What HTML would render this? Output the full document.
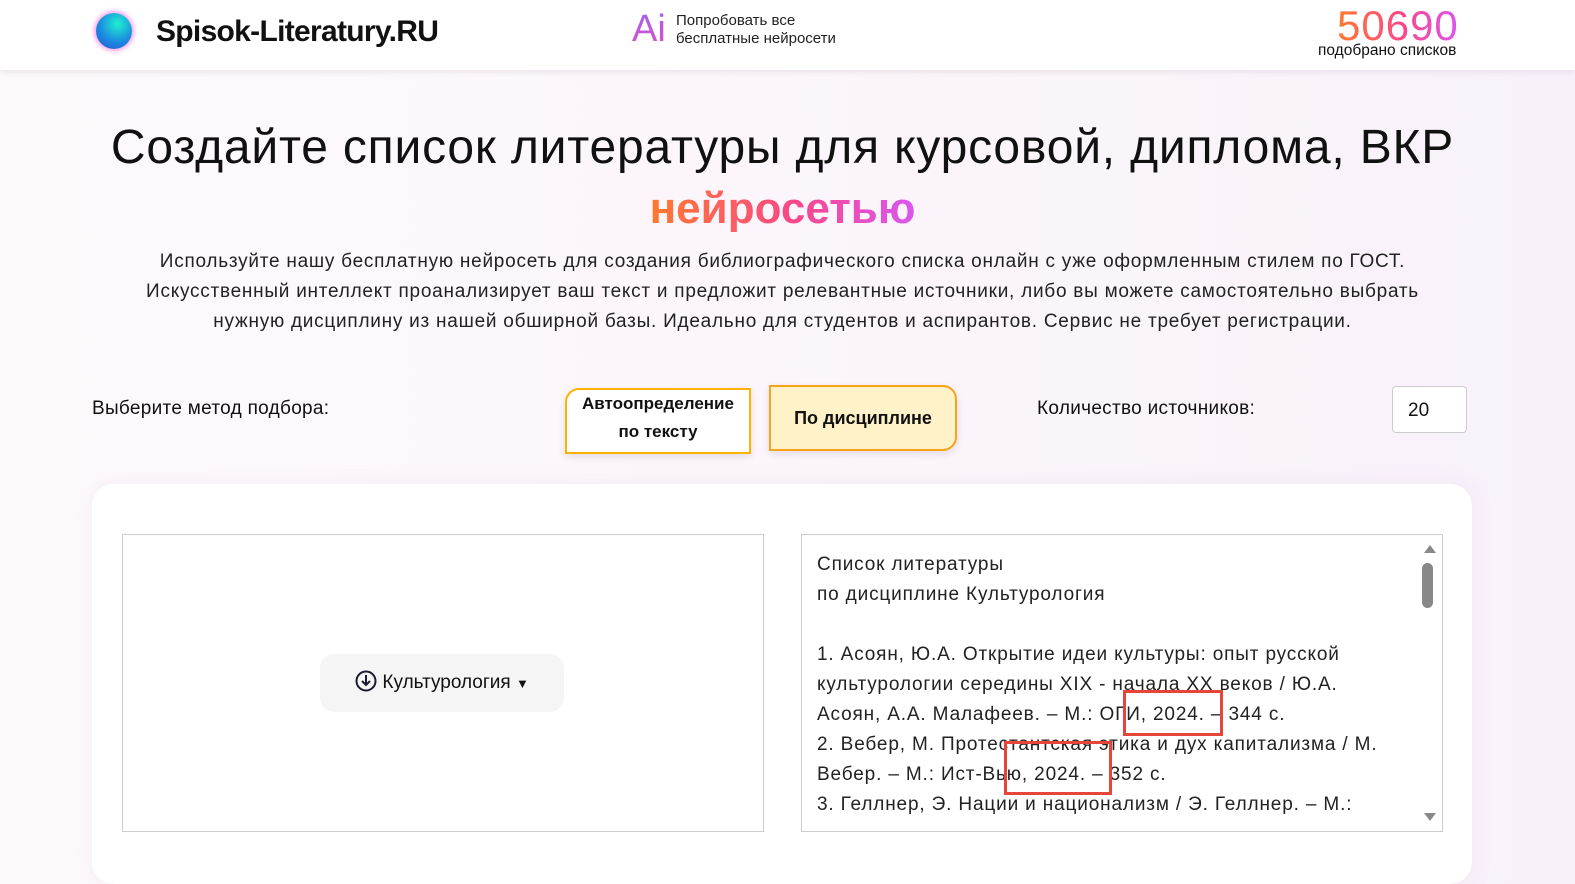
<!DOCTYPE html><html><head><meta charset="utf-8"><style>
body{margin:0;width:1575px;height:860px;overflow:hidden;font-family:"Liberation Sans",sans-serif;background:linear-gradient(90deg,#fdf9fb,#fbf5fb 60%,#f8f1fa);color:#111;position:relative}
.hdr{position:absolute;left:0;top:0;width:1575px;height:70px;background:#fff;box-shadow:0 2px 6px rgba(0,0,0,.08)}
.a{position:absolute}
.grad{background:linear-gradient(90deg,#ff7a2e,#f9478a 55%,#d957f0);-webkit-background-clip:text;background-clip:text;color:transparent}
.card{position:absolute;left:92px;top:484px;width:1380px;height:400px;background:#fff;border-radius:22px;box-shadow:0 0 20px rgba(200,170,200,.15)}
.box{position:absolute;border:1px solid #ccc;background:#fff}
.red{position:absolute;border:3px solid #e6453a}
</style></head><body>
<div class="hdr"></div>
<div class="a" style="left:96px;top:13px;width:36px;height:36px;border-radius:50%;background:radial-gradient(circle at 60% 30%,#1ff0d0,#1a8ae0 55%,#3050d0);box-shadow:0 0 5px 2px #f5a0e8"></div>
<div class="a" style="left:156px;top:15px;font-size:30px;font-weight:bold;letter-spacing:-0.7px">Spisok-Literatury.RU</div>
<div class="a" style="left:632px;top:8px;font-size:38px;background:linear-gradient(#a060f0,#e050c0);-webkit-background-clip:text;color:transparent">Ai</div>
<div class="a" style="left:676px;top:12px;font-size:15px;line-height:18px;color:#222">Попробовать все<br>бесплатные нейросети</div>
<div class="a grad" style="left:1337px;top:3px;font-size:42px;line-height:46px;letter-spacing:1px">50690</div>
<div class="a" style="left:1318px;top:42px;font-size:15.5px">подобрано списков</div>
<div class="a" style="left:0;width:1565px;top:118px;text-align:center;font-size:48px;line-height:60px;letter-spacing:0.8px;white-space:nowrap">Создайте список литературы для курсовой, диплома, ВКР</div>
<div class="a" style="left:0;width:1565px;top:182px;text-align:center;font-size:44px;line-height:54px"><span class="grad" style="font-weight:bold">нейросетью</span></div>
<div class="a" style="left:0;width:1565px;top:247px;text-align:center;font-size:19px;line-height:30px;color:#222;white-space:nowrap;letter-spacing:0.75px">Используйте нашу бесплатную нейросеть для создания библиографического списка онлайн с уже оформленным стилем по ГОСТ.<br>Искусственный интеллект проанализирует ваш текст и предложит релевантные источники, либо вы можете самостоятельно выбрать<br>нужную дисциплину из нашей обширной базы. Идеально для студентов и аспирантов. Сервис не требует регистрации.</div>
<div class="a" style="left:92px;top:398px;font-size:19px;letter-spacing:0.3px">Выберите метод подбора:</div>
<div class="a" style="left:565px;top:388px;width:182px;height:62px;border:2px solid #ffb300;border-radius:14px 0 0 0;background:#fff;text-align:center;font-size:17px;font-weight:bold;line-height:28px;box-shadow:0 3px 8px rgba(0,0,0,.1)">Автоопределение<br>по тексту</div>
<div class="a" style="left:769px;top:385px;width:184px;height:62px;border:2px solid #f9a21c;border-radius:0 14px 14px 0;background:#fff2c8;text-align:center;font-size:18px;font-weight:bold;line-height:62px;box-shadow:0 3px 8px rgba(0,0,0,.1)">По дисциплине</div>
<div class="a" style="left:1037px;top:398px;font-size:19px;letter-spacing:0.3px">Количество источников:</div>
<div class="a" style="left:1392px;top:386px;width:75px;height:47px;border:1px solid #ccc;border-radius:4px;background:#fff;font-size:19px;line-height:47px;padding-left:15px;box-sizing:border-box">20</div>
<div class="card"></div>
<div class="box" style="left:122px;top:534px;width:640px;height:296px"></div>
<div class="a" style="left:320px;top:654px;width:244px;height:58px;background:#f5f5f5;border-radius:14px;font-size:19px;line-height:58px;text-align:center">
<svg width="22" height="22" viewBox="0 0 22 22" style="vertical-align:-4px"><circle cx="11" cy="11" r="9.5" fill="none" stroke="#1a1a30" stroke-width="2"/><path d="M11 5v10M7 11l4 4 4-4" fill="none" stroke="#1a1a30" stroke-width="2"/></svg> Культурология <span style="font-size:13px">▼</span></div>
<div class="box" style="left:801px;top:534px;width:640px;height:296px;overflow:hidden">
<div style="position:absolute;left:15px;top:15px;width:600px;font-size:19px;line-height:30px;color:#222;white-space:nowrap;letter-spacing:0.85px">Список литературы<br>по дисциплине Культурология<br><br>1. Асоян, Ю.А. Открытие идеи культуры: опыт русской<br>культурологии середины XIX - начала XX веков / Ю.А.<br>Асоян, А.А. Малафеев. – М.: ОГИ, 2024. – 344 с.<br>2. Вебер, М. Протестантская этика и дух капитализма / М.<br>Вебер. – М.: Ист-Вью, 2024. – 352 с.<br>3. Геллнер, Э. Нации и национализм / Э. Геллнер. – М.:</div>
<div style="position:absolute;right:6px;top:10px;width:0;height:0;border:6px solid transparent;border-bottom:8px solid #888;border-top:0"></div>
<div style="position:absolute;right:9px;top:28px;width:11px;height:45px;border-radius:6px;background:#888"></div>
<div style="position:absolute;right:6px;bottom:10px;width:0;height:0;border:6px solid transparent;border-top:8px solid #888;border-bottom:0"></div>
</div>
<div class="red" style="left:1123px;top:690px;width:94px;height:40px"></div>
<div class="red" style="left:1004px;top:741px;width:102px;height:48px"></div>
</body></html>
